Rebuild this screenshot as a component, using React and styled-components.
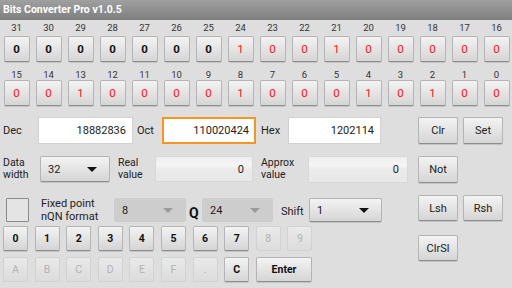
import React from "react";
import styled, { createGlobalStyle, css } from "styled-components";

const GlobalStyle = createGlobalStyle`
  html, body {
    margin: 0;
    padding: 0;
    width: 512px;
    height: 288px;
    overflow: hidden;
    background: #dedede;
    font-family: "Roboto", "Liberation Sans", sans-serif;
  }
`;

const Screen = styled.div`
  width: 512px;
  height: 288px;
  background: #dedede;
  display: flex;
  flex-direction: column;
`;

const TitleBar = styled.div`
  height: 20px;
  background: linear-gradient(#a0a0a0, #7e7e7e);
  color: #fff;
  font-size: 10.5px;
  font-weight: bold;
  line-height: 20px;
  padding-left: 3px;
`;

const BitGrid = styled.div`
  display: grid;
  grid-template-columns: repeat(16, 32px);
  margin-top: ${(p) => p.$top}px;
`;

const BitCell = styled.div`
  display: flex;
  flex-direction: column;
  align-items: center;
  padding-left: 1px;
`;

const BitLabel = styled.div`
  height: ${(p) => p.$h}px;
  line-height: ${(p) => p.$h}px;
  font-size: 9.5px;
  color: #333;
`;

const buttonLook = css`
  box-sizing: border-box;
  border: 1px solid #b4b4b4;
  border-bottom-color: #8e8e8e;
  border-radius: 2px;
  background: linear-gradient(#f3f3f3, #d5d5d5);
  box-shadow: 0 1px 0 rgba(0, 0, 0, 0.12);
  display: flex;
  align-items: center;
  justify-content: center;
  font-family: "Roboto", "Liberation Sans", sans-serif;
`;

const BitButton = styled.div`
  ${buttonLook};
  width: 26px;
  height: 26px;
  margin-top: 1px;
  font-size: 11.5px;
  font-weight: ${(p) => (p.$red ? "normal" : "bold")};
  color: ${(p) => (p.$red ? "#ff1010" : "#111")};
`;

const Lower = styled.div`
  display: flex;
  margin-top: 11px;
`;

const LeftCol = styled.div`
  width: 410px;
  display: flex;
  flex-direction: column;
`;

const RightCol = styled.div`
  margin-left: 8px;
  display: flex;
  flex-direction: column;
`;

const Row = styled.div`
  display: flex;
  align-items: center;
  height: ${(p) => p.$h || 27}px;
  margin-top: ${(p) => p.$top || 0}px;
  padding-left: ${(p) => p.$pl || 0}px;
`;

const Label = styled.div`
  box-sizing: border-box;
  width: ${(p) => p.$w}px;
  padding-left: ${(p) => p.$pl || 0}px;
  margin-top: ${(p) => p.$mt || 0}px;
  font-size: ${(p) => p.$fs || 10.5}px;
  line-height: ${(p) => p.$lh || 12}px;
  color: #222;
`;

const Field = styled.div`
  box-sizing: border-box;
  width: ${(p) => p.$w}px;
  height: ${(p) => p.$h || 27}px;
  display: flex;
  align-items: center;
  justify-content: flex-end;
  padding-right: 6px;
  font-size: 11px;
  color: #222;
  background: #fff;
  border: 1px solid #d2d2d2;
  ${(p) =>
    p.$focus &&
    css`
      border: 2px solid #f7951d;
      padding-right: 5px;
    `}
  ${(p) =>
    p.$readonly &&
    css`
      background: linear-gradient(#eeeeee 0%, #f5f5f5 35%, #ebebeb 50%, #e8e8e8 100%);
      border-color: #d8d8d8;
      padding-right: 8px;
    `}
`;

const Select = styled.div`
  ${buttonLook};
  width: ${(p) => p.$w}px;
  height: ${(p) => p.$h || 26}px;
  justify-content: space-between;
  padding: 0 12px 0 7px;
  font-size: 11px;
  color: #222;
  ${(p) =>
    p.$disabled &&
    css`
      background: #cdcdcd;
      border-color: #cdcdcd;
      box-shadow: none;
    `}
`;

const Arrow = styled.span`
  width: 0;
  height: 0;
  border-left: 5px solid transparent;
  border-right: 5px solid transparent;
  border-top: 5px solid ${(p) => (p.$disabled ? "#9b9b9b" : "#111")};
`;

const CheckBox = styled.div`
  box-sizing: border-box;
  width: 23px;
  height: 24px;
  border: 1px solid #8a8a8a;
  border-radius: 1px;
  background: #e4e4e4;
`;

const QLabel = styled.div`
  width: 16px;
  padding-left: 3px;
  box-sizing: border-box;
  font-size: 14px;
  font-weight: bold;
  color: #111;
  margin-top: 6px;
`;

const Keypad = styled.div`
  display: grid;
  grid-template-columns: repeat(10, 25px);
  column-gap: 6.6px;
  row-gap: 6px;
  margin-top: 3px;
  padding-left: 3px;
`;

const Key = styled.div`
  ${buttonLook};
  height: 25px;
  grid-column: span ${(p) => p.$span || 1};
  font-size: 10.5px;
  font-weight: bold;
  color: #111;
  ${(p) =>
    p.$disabled &&
    css`
      background: linear-gradient(#e9e9e9, #dcdcdc);
      border-color: #d2d2d2;
      box-shadow: none;
      color: #b3b3b3;
      font-weight: normal;
    `}
`;

const ActionRow = styled.div`
  display: flex;
  gap: 5px;
  margin-top: ${(p) => p.$top || 0}px;
`;

const ActionButton = styled.div`
  ${buttonLook};
  width: 40px;
  height: ${(p) => p.$h || 27}px;
  font-size: 11px;
  color: #222;
`;

const topBits = [0, 0, 0, 0, 0, 0, 0, 1, 0, 0, 1, 0, 0, 0, 0, 0];
const lowBits = [0, 0, 1, 0, 0, 0, 0, 1, 0, 0, 0, 1, 0, 1, 0, 0];

const BitsRow = ({ start, bits, top, labelH, blackCount }) => (
  <BitGrid $top={top}>
    {bits.map((b, i) => (
      <BitCell key={i}>
        <BitLabel $h={labelH}>{start - i}</BitLabel>
        <BitButton $red={i >= blackCount}>{b}</BitButton>
      </BitCell>
    ))}
  </BitGrid>
);

const keysTop = ["0", "1", "2", "3", "4", "5", "6", "7", "8", "9"];
const keysBottom = ["A", "B", "C", "D", "E", "F", "."];

export default function App() {
  return (
    <Screen>
      <GlobalStyle />
      <TitleBar>Bits Converter Pro v1.0.5</TitleBar>
      <BitsRow start={31} bits={topBits} top={0} labelH={15} blackCount={7} />
      <BitsRow start={15} bits={lowBits} top={8} labelH={9} blackCount={0} />
      <Lower>
        <LeftCol>
          <Row $pl={3}>
            <Label $w={35} $fs={11}>Dec</Label>
            <Field $w={95}>18882836</Field>
            <Label $w={29} $pl={4} $fs={11}>Oct</Label>
            <Field $w={94} $focus>110020424</Field>
            <Label $w={32} $pl={5} $fs={11}>Hex</Label>
            <Field $w={93}>1202114</Field>
          </Row>
          <Row $pl={3} $top={12} $h={26}>
            <Label $w={37}>Data<br />width</Label>
            <Select $w={70}>32<Arrow /></Select>
            <Label $w={45} $pl={8}>Real<br />value</Label>
            <Field $w={98} $h={26} $readonly>0</Field>
            <Label $w={55} $pl={8}>Approx<br />value</Label>
            <Field $w={100} $h={27} $readonly>0</Field>
          </Row>
          <Row $pl={6} $top={15} $h={26}>
            <CheckBox />
            <Label $w={85} $pl={12} $fs={11} $lh={13}>
              Fixed point<br />nQN format
            </Label>
            <Select $w={72} $h={24} $disabled>8<Arrow $disabled /></Select>
            <QLabel>Q</QLabel>
            <Select $w={71} $h={24} $disabled>24<Arrow $disabled /></Select>
            <Label $w={36} $pl={8} $mt={4} $fs={11}>Shift</Label>
            <Select $w={73} $h={24}>1<Arrow /></Select>
          </Row>
          <Keypad>
            {keysTop.map((k) => (
              <Key key={k} $disabled={k === "8" || k === "9"}>{k}</Key>
            ))}
            {keysBottom.map((k) => (
              <Key key={k} $disabled>{k}</Key>
            ))}
            <Key>C</Key>
            <Key $span={2}>Enter</Key>
          </Keypad>
        </LeftCol>
        <RightCol>
          <ActionRow>
            <ActionButton>Clr</ActionButton>
            <ActionButton>Set</ActionButton>
          </ActionRow>
          <ActionRow $top={12}>
            <ActionButton>Not</ActionButton>
          </ActionRow>
          <ActionRow $top={12}>
            <ActionButton $h={26}>Lsh</ActionButton>
            <ActionButton $h={26}>Rsh</ActionButton>
          </ActionRow>
          <ActionRow $top={14}>
            <ActionButton $h={26}>ClrSl</ActionButton>
          </ActionRow>
        </RightCol>
      </Lower>
    </Screen>
  );
}
